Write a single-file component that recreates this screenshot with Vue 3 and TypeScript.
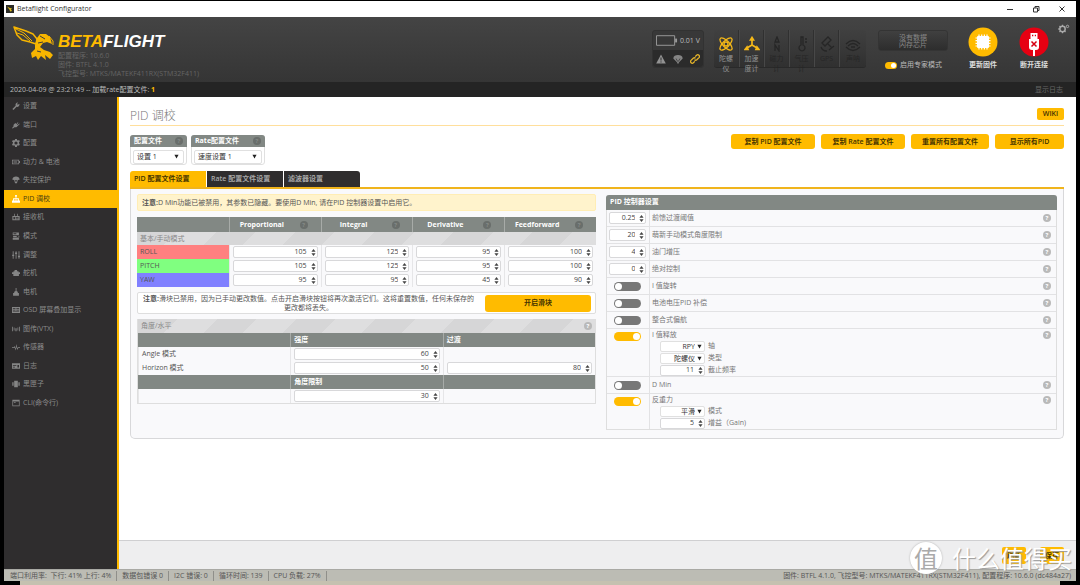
<script setup lang="ts">
import { ref } from 'vue'

interface NavItem { icon: string; label: string }
interface PidRow { name: string; color: string; values: number[] }
interface SubField { kind: 'select' | 'number'; value: string; label: string }
interface Feature { id: string; label: string; on: boolean; fields: SubField[] }

const nav: NavItem[] = [
  { icon: 'wrench', label: '设置' },
  { icon: 'plug', label: '端口' },
  { icon: 'gear', label: '配置' },
  { icon: 'battery', label: '动力 & 电池' },
  { icon: 'chute', label: '失控保护' },
  { icon: 'pid', label: 'PID 调校' },
  { icon: 'receiver', label: '接收机' },
  { icon: 'modes', label: '模式' },
  { icon: 'sliders', label: '调整' },
  { icon: 'servo', label: '舵机' },
  { icon: 'motor', label: '电机' },
  { icon: 'osd', label: 'OSD 屏幕叠加显示' },
  { icon: 'vtx', label: '图传(VTX)' },
  { icon: 'pulse', label: '传感器' },
  { icon: 'log', label: '日志' },
  { icon: 'box', label: '黑匣子' },
  { icon: 'cli', label: 'CLI(命令行)' },
]

const icons: Record<string, string> = {
  wrench: 'M.5 9.500 5 5.200C4.200 2.800 6 .5 8.500 .8L6.900 2.700 8 3.900 10.200 2.400C10.800 5 8.600 7.300 6.300 6.700L2.100 10.900Z',
  plug: 'M0 9.5 2 7.6 2.2 5 4.6 2.6 6 4 8 1.6 8.8 2.3 6.8 4.8 7.6 5.5 10 3.4 10.6 4.2 8.2 6.4 6 8.6 3.4 8.6 1 10.4Z',
  gear: 'M4.2 0H6.8L7 1.6 8.3 2.2 9.7 1.3 10.8 3.2 9.6 4.4V6L10.8 7.2 9.6 9.2 8.1 8.5 7 9.3 6.7 11H4.2L3.9 9.3 2.8 8.6 1.2 9.3 0 7.2 1.3 6V4.6L0 3.4 1.3 1.3 2.8 2.1 3.9 1.5ZM5.5 3.3A2.2 2.2 0 1 0 5.5 7.7 2.2 2.2 0 1 0 5.5 3.3Z',
  battery: 'M0 2.5H9.8V4H11V7H9.8V8.5H0ZM1 3.5V7.5H8.8V3.5ZM2 4.8H7V6.2H2Z',
  chute: 'M.5 5C.6 2.2 2.8 .6 5.5 .6S10.4 2.2 10.5 5L8 5.6 6.8 9.8H4.2L3 5.6ZM4 5.8 5 8H6L7 5.8Z',
  pid: 'M4.3 0H6.7V2.5H6V4.5H9.5V7.5H11V10.5H0V7.5H1.5V4.5H5V2.5H4.3ZM3 6V7.5H5V6ZM6 6V7.5H8V6Z',
  receiver: 'M3 1H4V4H7V1H8V4H10.5V10H.5V4H3ZM2 5.5V8.5H4V5.5ZM5 5.5V6.5H9V5.5ZM5 7.5V8.5H9V7.5Z',
  modes: 'M1 .6H9.5V4H1ZM2 1.6V3H6V1.6ZM1.5 5H10V7.6H1.5ZM6.5 5.6V7H9V5.6ZM1 8.4H9.5V10.6H1Z',
  sliders: 'M1 .5H2.2V5H3V7H2.2V10.5H1V7H.2V5H1ZM5 .5H6.2V2H7V4H6.2V10.5H5V4H4.2V2H5ZM9 .5H10.2V6.5H11V8.5H10.2V10.5H9V8.5H8.2V6.5H9Z',
  servo: 'M3.5 1.5H7V3H9V4.5H11V7H9.5V9.5H1.8V7H0V4.5H2V3H3.5Z',
  motor: 'M5 0H6.2V4L8 5V7H9.5V10.5H1.5V7H3V5L5 4Z',
  osd: 'M0 1.5H11V9.5H0ZM1.2 3V4H4.8V3ZM6 3V4H9.8V3ZM1.2 5.2V6.2H4.8V5.2ZM6 5.2V6.2H9.8V5.2ZM1.2 7.2V8H9.8V7.2Z',
  vtx: 'M.2 2.5H1.3V8.5H.2ZM2.4 3.5H3.4V7.5H2.4ZM4.7 4.5H6.3V8.5H4.7ZM7.6 3.5H8.6V7.5H7.6ZM9.7 2.5H10.8V8.5H9.7Z',
  pulse: 'M0 6H2.6L3.8 4 4.8 8 6 1.5 7.2 7.3 8 6H11V7H8.6L7.3 9.6 6 5.4 5 10.4 3.6 6.2 3.1 7H0Z',
  log: 'M0 1.8H11V9.2H0ZM1.2 4V5H6V4ZM1.2 6.4V7.4H4V6.4ZM7.5 4V7.4H9.6V4Z',
  box: 'M3 1H8V10H3ZM.4 3H2.2V8H.4ZM8.8 3H10.6V8H8.8Z',
  cli: 'M.5 1H10.5V10H.5ZM1.5 3.3V9H9.5V3.3ZM2.5 4.6H5V5.6H2.5Z',
}

const sensors = [
  { id: 'gyro', label: '陀螺仪', on: true },
  { id: 'accel', label: '加速度计', on: true },
  { id: 'mag', label: '磁力计', on: false },
  { id: 'baro', label: '气压计', on: false },
  { id: 'gps', label: 'GPS', on: false },
  { id: 'sonar', label: '声呐', on: false },
]

const actions = ['复制 PID 配置文件', '复制 Rate 配置文件', '重置所有配置文件', '显示所有PID']
const tabs = ['PID 配置文件设置', 'Rate 配置文件设置', '滤波器设置']
const activeTab = ref(0)
const activeNav = ref(5)
const expert = ref(true)

const terms = ['Proportional', 'Integral', 'Derivative', 'Feedforward']
const rows = ref<PidRow[]>([
  { name: 'ROLL', color: 'roll', values: [105, 125, 95, 100] },
  { name: 'PITCH', color: 'pitch', values: [105, 125, 95, 100] },
  { name: 'YAW', color: 'yaw', values: [95, 95, 45, 90] },
])

const numeric = ref([
  { id: 'ff', value: '0.25', label: '前馈过渡阈值' },
  { id: 'acro', value: '20', label: '萌新手动模式角度限制' },
  { id: 'throttle', value: '4', label: '油门增压' },
  { id: 'absolute', value: '0', label: '绝对控制' },
])

const features = ref<Feature[]>([
  { id: 'rotation', label: 'I 值旋转', on: false, fields: [] },
  { id: 'vbat', label: '电池电压PID 补偿', on: false, fields: [] },
  { id: 'yawint', label: '整合式偏航', on: false, fields: [] },
  {
    id: 'relax', label: 'I 值释放', on: true, fields: [
      { kind: 'select', value: 'RPY', label: '轴' },
      { kind: 'select', value: '陀螺仪', label: '类型' },
      { kind: 'number', value: '11', label: '截止频率' },
    ],
  },
  { id: 'dmin', label: 'D Min', on: false, fields: [] },
  {
    id: 'antigravity', label: '反重力', on: true, fields: [
      { kind: 'select', value: '平滑', label: '模式' },
      { kind: 'number', value: '5', label: '增益（Gain)' },
    ],
  },
])

const stats = ['端口利用率:  下行: 41% 上行: 4%', '数据包错误 0', 'I2C 错误: 0', '循环时间: 139', 'CPU 负载: 27%']
</script>

<template>
  <div class="screen">
    <div class="window">
      <div class="titlebar">
        <svg class="app-icon" viewBox="0 0 8 8"><path d="M0 0H8V8H0Z" fill="#2c2c28" /><path d="M1 1.5 4 3 6 3.2 5 4.3 6 6 4.2 6.6 3.4 4.4Z" fill="#d9b81c" /></svg>
        <span class="app-name">Betaflight Configurator</span>
        <div class="window-buttons">
          <button aria-label="最小化"><svg viewBox="0 0 8 8"><path d="M1 4.5H7" /></svg></button>
          <button aria-label="还原"><svg viewBox="0 0 8 8"><path d="M1.5 3H5.5V7H1.5ZM3 3V1.5H7V5.5H5.5" /></svg></button>
          <button aria-label="关闭"><svg viewBox="0 0 8 8"><path d="M1.5 1.5 6.5 6.5M6.5 1.5 1.5 6.5" /></svg></button>
        </div>
      </div>

      <header class="header">
        <svg class="wasp" viewBox="0 0 42 34">
          <path d="M1 1 13 5 20 8 24 13 23 18 17 16 9 14 4 9Z" fill="none" stroke="#f7b500" stroke-width="1.500" stroke-linejoin="round" />
          <path d="M3 3 11 7 19 15M4 7 10 9 17 15" fill="none" stroke="#f7b500" stroke-width="1" />
          <path d="M24 12 27 8 33 8 37 11 39 18 34 16 30 17 27 21 31 24 37 26 40 29 37 33 32 29 33 34 28 30 25 34 23 30 19 32 18 27 22 23 22 19Z" fill="#f7b500" />
          <path d="M27 10 32 13M25 17 30 16M24 25 28 26" stroke="#3d3d3d" stroke-width="1" />
          <path d="M36 10 40 15 40 19" fill="none" stroke="#f7b500" stroke-width="1" />
        </svg>
        <div class="brand">
          <div class="wordmark"><span>BETA</span>FLIGHT</div>
          <p>配置程序: 10.6.0</p>
          <p>固件: BTFL 4.1.0</p>
          <p>飞控型号: MTKS/MATEKF411RX(STM32F411)</p>
        </div>

        <div class="battery-box">
          <div class="voltage">
            <svg viewBox="0 0 23 11"><path d="M.5 .5H19.5V10.5H.5Z" fill="none" stroke="#9a9a9a" /><path d="M20 3.5H22V7.5H20Z" fill="#9a9a9a" /></svg>
            <span>0.01 V</span>
          </div>
          <div class="flags">
            <svg viewBox="0 0 10 10"><path d="M5 .5 9.8 9.5H.2Z" fill="#929292" /><path d="M5 3.5V6.5M5 7.4V8.5" stroke="#2e2e2e" stroke-width="1" /></svg>
            <svg viewBox="0 0 10 10"><path d="M.3 4.400C.5 2 2.400 1 5 1S9.500 2 9.700 4.400L5.800 8.500V9.500H4.200V8.500Z" fill="#858585" /><path d="M3 4.500 4.700 7.500M7 4.500 5.300 7.500" stroke="#2e2e2e" stroke-width=".7" /></svg>
            <svg viewBox="0 0 10 10"><path d="M5.200 2.600 6.600 1.200A1.700 1.700 0 0 1 9 3.600L6.800 5.800A1.700 1.700 0 0 1 4.500 5.700M4.800 7.400 3.400 8.800A1.700 1.700 0 0 1 1 6.400L3.200 4.200A1.700 1.700 0 0 1 5.500 4.300" fill="none" stroke="#e5b429" stroke-width="1.300" /></svg>
          </div>
        </div>

        <ul class="sensors">
          <li v-for="s in sensors" :key="s.id" :class="{ on: s.on }">
            <svg viewBox="0 0 16 16">
              <g v-if="s.id === 'gyro'">
                <ellipse cx="8" cy="8" rx="8" ry="3.200" transform="rotate(45 8 8)" /><ellipse cx="8" cy="8" rx="8" ry="3.200" transform="rotate(-45 8 8)" /><circle cx="8" cy="8" r="2" />
              </g>
              <g v-else-if="s.id === 'accel'"><path d="M8 2V9L2 12.500M8 9 14 12.500M6.500 4 8 1.500 9.500 4ZM3 11 1 13.500H4ZM13 11 15 13.500H12Z" stroke-width="1.700" /></g>
              <g v-else-if="s.id === 'mag'"><path d="M6 6 8 1 10 6ZM6 15V9L10 15V9" /></g>
              <g v-else-if="s.id === 'baro'"><path d="M7 1H9V9A3 3 0 1 1 7 9ZM11 3H13M11 6H13" /></g>
              <g v-else-if="s.id === 'gps'"><path d="M3 7 9 1 12 4 6 10ZM9 8 13 12M2 11A6 6 0 0 0 8 15M10 14 15 10" /></g>
              <g v-else><path d="M1 8Q8 1 15 8M3 10Q8 5 13 10M1 11Q8 18 15 11M6 11H10" /></g>
            </svg>
            <span>{{ s.label }}</span>
          </li>
        </ul>

        <div class="dataflash">
          <div class="flash">没有数据<br>闪存芯片</div>
          <label class="expert"><input v-model="expert" type="checkbox"><span>启用专家模式</span></label>
        </div>

        <button class="round">
          <svg viewBox="0 0 30 30"><circle cx="15" cy="15" r="14.500" fill="#ffbb00" /><path d="M10 10H20V20H10Z" fill="#fff" stroke="#fff" stroke-linejoin="round" stroke-width="2" /><path d="M11 7.500V22.500M13.700 7.500V22.500M16.400 7.500V22.500M19 7.500V22.500M7.500 11H22.500M7.500 13.700H22.500M7.500 16.400H22.500M7.500 19H22.500" stroke="#fff" stroke-width="1.200" /></svg>
          <span>更新固件</span>
        </button>
        <button class="round">
          <svg viewBox="0 0 30 30"><circle cx="15" cy="15" r="14.500" fill="#e60012" /><path d="M11.500 6H18.500V12H11.500ZM10 12H20V20Q20 23 17 23H13Q10 23 10 20ZM14 23H16V29H14Z" fill="#fff" /><path d="M13 8.500H14.300M15.800 8.500H17M12.500 14.500 17.500 19.500M17.500 14.500 12.500 19.500" stroke="#d50012" stroke-width="1.500" /></svg>
          <span>断开连接</span>
        </button>
        <button class="options" aria-label="选项"><svg viewBox="0 0 12 10"><circle cx="4.500" cy="5" r="2.700" fill="none" stroke="#aaa" stroke-width="1.500" /><path d="M4.500 .8V2M4.500 8V9.200M.3 5H1.500M1.500 2 2.400 2.900M1.500 8 2.400 7.100M7.500 8 6.600 7.100" stroke="#aaa" stroke-width="1.300" /><circle cx="9.500" cy="2.400" r="1.200" fill="none" stroke="#aaa" /></svg></button>
      </header>

      <div class="logbar">
        <span>2020-04-09 @ 23:21:49 -- 加载rate配置文件: <b>1</b></span>
        <button>显示日志</button>
      </div>

      <div class="body">
        <nav class="sidebar">
          <ul>
            <li v-for="(item, i) in nav" :key="item.icon" :class="{ active: i === activeNav }">
              <a href="#" @click.prevent="activeNav = i">
                <svg viewBox="0 0 11 11"><path :d="icons[item.icon]" fill-rule="evenodd" /></svg>
                <span>{{ item.label }}</span>
              </a>
            </li>
          </ul>
        </nav>

        <main class="content">
          <div class="page">
            <div class="heading">
              <h1>PID 调校</h1>
              <a class="wiki" href="#">WIKI</a>
            </div>

            <div class="profiles">
              <div class="profile first">
                <label for="profile">配置文件<i class="help dark">?</i></label>
                <div class="pick"><select id="profile"><option>设置 1</option></select><svg viewBox="0 0 6 6"><path d="M.5 1H5.500L3 5.500Z" /></svg></div>
              </div>
              <div class="profile second">
                <label for="rate">Rate配置文件<i class="help dark">?</i></label>
                <div class="pick"><select id="rate"><option>速度设置 1</option></select><svg viewBox="0 0 6 6"><path d="M.5 1H5.500L3 5.500Z" /></svg></div>
              </div>
              <div class="actions">
                <button v-for="a in actions" :key="a">{{ a }}</button>
              </div>
            </div>

            <div class="tabs">
              <button v-for="(t, i) in tabs" :key="t" :class="{ active: i === activeTab }" @click="activeTab = i">{{ t }}</button>
            </div>

            <div class="panel">
              <section class="left">
                <p class="note"><b>注意:</b>D Min功能已被禁用，其参数已隐藏。要使用D Min, 请在PID 控制器设置中启用它。</p>

                <table class="grid pid">
                  <thead>
                    <tr>
                      <th></th>
                      <th v-for="t in terms" :key="t"><div class="term"><span>{{ t }}</span><i class="help dark">?</i></div></th>
                    </tr>
                  </thead>
                  <tbody>
                    <tr class="section"><td colspan="5">基本/手动模式</td></tr>
                    <tr v-for="r in rows" :key="r.name">
                      <td :class="r.color">{{ r.name }}</td>
                      <td v-for="(v, i) in r.values" :key="i">
                        <div class="number"><input v-model="r.values[i]" type="number" :aria-label="r.name + ' ' + terms[i]"><svg viewBox="0 0 6 10"><path d="M.5 4 3 .8 5.500 4ZM.5 6 3 9.200 5.500 6Z" /></svg></div>
                      </td>
                    </tr>
                  </tbody>
                </table>

                <div class="slider-note">
                  <p><b>注意:</b>滑块已禁用，因为已手动更改数值。点击开启滑块按钮将再次激活它们。这将重置数值，任何未保存的更改都将丢失。</p>
                  <button>开启滑块</button>
                </div>

                <table class="grid angle">
                  <tbody>
                    <tr class="section"><td colspan="3"><div class="between"><span>角度/水平</span><i class="help">?</i></div></td></tr>
                    <tr class="dark"><th></th><th>强度</th><th>过渡</th></tr>
                    <tr>
                      <td><label for="angle">Angle 模式</label></td>
                      <td><div class="number"><input id="angle" type="number" value="60"><svg viewBox="0 0 6 10"><path d="M.5 4 3 .8 5.500 4ZM.5 6 3 9.200 5.500 6Z" /></svg></div></td>
                      <td></td>
                    </tr>
                    <tr>
                      <td><label for="horizon">Horizon 模式</label></td>
                      <td><div class="number"><input id="horizon" type="number" value="50"><svg viewBox="0 0 6 10"><path d="M.5 4 3 .8 5.500 4ZM.5 6 3 9.200 5.500 6Z" /></svg></div></td>
                      <td><div class="number"><input type="number" value="80" aria-label="Horizon 过渡"><svg viewBox="0 0 6 10"><path d="M.5 4 3 .8 5.500 4ZM.5 6 3 9.200 5.500 6Z" /></svg></div></td>
                    </tr>
                    <tr class="dark"><th></th><th><label for="limit">角度限制</label></th><th></th></tr>
                    <tr>
                      <td></td>
                      <td><div class="number"><input id="limit" type="number" value="30"><svg viewBox="0 0 6 10"><path d="M.5 4 3 .8 5.500 4ZM.5 6 3 9.200 5.500 6Z" /></svg></div></td>
                      <td></td>
                    </tr>
                  </tbody>
                </table>
              </section>

              <section class="right">
                <h2>PID 控制器设置</h2>
                <div v-for="n in numeric" :key="n.id" class="setting">
                  <div class="control"><div class="number"><input :id="n.id" v-model="n.value" type="number" step="any"><svg viewBox="0 0 6 10"><path d="M.5 4 3 .8 5.500 4ZM.5 6 3 9.200 5.500 6Z" /></svg></div></div>
                  <div class="detail"><label :for="n.id">{{ n.label }}</label></div>
                  <i class="help">?</i>
                </div>
                <div v-for="f in features" :key="f.id" class="setting" :class="{ tall: f.fields.length }">
                  <div class="control"><input :id="f.id" v-model="f.on" class="switch" type="checkbox"></div>
                  <div class="detail">
                    <label :for="f.id">{{ f.label }}</label>
                    <div v-for="s in f.fields" :key="s.label" class="field">
                      <div v-if="s.kind === 'select'" class="pick small"><select :id="f.id + s.label"><option>{{ s.value }}</option></select><svg viewBox="0 0 6 6"><path d="M.5 1H5.500L3 5.500Z" /></svg></div>
                      <div v-else class="number"><input :id="f.id + s.label" v-model="s.value" type="number"><svg viewBox="0 0 6 10"><path d="M.5 4 3 .8 5.500 4ZM.5 6 3 9.200 5.500 6Z" /></svg></div>
                      <label :for="f.id + s.label">{{ s.label }}</label>
                    </div>
                  </div>
                  <i class="help">?</i>
                </div>
              </section>
            </div>
          </div>

          <div class="toolbar"><button>刷新</button><button>保存</button></div>
        </main>
      </div>

      <footer class="status">
        <span v-for="s in stats" :key="s" class="stat">{{ s }}</span>
        <span class="version">固件: BTFL 4.1.0, 飞控型号: MTKS/MATEKF411RX(STM32F411), 配置程序: 10.6.0 (dc484a27)</span>
      </footer>
    </div>
    <div class="desk-edge"></div>

    <div class="watermark"><span class="seal">值</span><span class="words">什么值得买</span></div>
  </div>
</template>

<style>
body { margin: 0; background: #000; }
</style>

<style scoped>
* { box-sizing: border-box; }
.screen {
  position: relative;
  display: flex;
  flex-direction: column;
  min-height: 100vh;
  padding: 1px 4px 0;
  background: #000;
  color: #555;
  font: 7px/10px "Open Sans", "Noto Sans CJK SC", sans-serif;
}
button, input, select { margin: 0; padding: 0; border: 0; font: inherit; color: inherit; background: none; }
a { color: inherit; text-decoration: none; }
ul { margin: 0; padding: 0; list-style: none; }
p, h1, h2 { margin: 0; }
svg { display: block; flex: none; }
.window { flex: 1; display: flex; flex-direction: column; }

.titlebar { display: flex; align-items: center; height: 16px; padding: 0 10px 0 2px; background: #fff; color: #333; }
.app-icon { width: 8px; height: 8px; margin-right: 3px; }
.app-name { flex: 1; }
.window-buttons { display: flex; gap: 18px; }
.window-buttons button { width: 8px; height: 8px; }
.window-buttons svg { width: 8px; height: 8px; fill: none; stroke: #333; stroke-width: 1; }

.header { display: flex; height: 65px; padding: 9px 6px 0 9px; background: linear-gradient(#444, #353535); }
.wasp { width: 42px; height: 34px; }
.brand { flex: 1; margin-left: 3px; padding-top: 7px; color: #656565; }
.brand p { line-height: 9px; }
.wordmark { height: 18px; color: #fff; font: italic 900 17px/18px "Liberation Sans", Inter, sans-serif; }
.wordmark span { color: #ffbb00; }
.battery-box { width: 52px; height: 38px; margin: 4px 10px 0 0; border-radius: 3px; background: #383838; border: 1px solid #323232; }
.voltage { display: flex; align-items: center; gap: 2px; height: 19px; padding-left: 3px; color: #bbb; white-space: nowrap; }
.voltage svg { width: 22px; height: 11px; }
.flags { display: flex; align-items: center; justify-content: space-around; height: 17px; background: #2b2b2b; border-radius: 0 0 3px 3px; }
.flags svg { width: 10px; height: 10px; }
.sensors { display: flex; height: 38px; margin: 4px 12px 0 0; border-radius: 3px; background: linear-gradient(#404040, #303030); border-bottom: 1px solid #292929; }
.sensors li { width: 25px; padding-top: 6px; border-right: 1px solid #303030; color: #262626; text-align: center; }
.sensors li + li { border-left: 1px solid #484848; }
.sensors li:last-child { width: 27px; border-right: 0; }
.sensors svg { width: 16px; height: 16px; margin: 0 auto 2px; fill: none; stroke: #262626; stroke-width: 1.3; }
.sensors .on { color: #929292; }
.sensors .on svg { stroke: #f5b818; }
.sensors span { display: block; width: 15px; margin: 0 auto; }
.dataflash { width: 70px; margin-right: 20px; padding-top: 4px; }
.flash { height: 21px; padding-top: 3px; border-radius: 3px; background: linear-gradient(#404040, #2d2d2d); border: 1px solid #343434; color: #888; line-height: 7px; text-align: center; }
.expert { display: flex; align-items: center; gap: 3px; height: 10px; margin: 9px 0 0 7px; color: #bbb; white-space: nowrap; }
.expert input, .switch { position: relative; appearance: none; border-radius: 6px; background: #777; }
.expert input { width: 12px; height: 7px; }
.expert input::before, .switch::before { content: ""; position: absolute; left: 1px; top: 1px; border-radius: 50%; background: #fff; }
.expert input::before { width: 5px; height: 5px; }
.expert input:checked, .switch:checked { background: #ffbb00; }
.expert input:checked::before { left: 6px; }
.round { display: flex; flex-direction: column; align-items: center; gap: 3px; width: 30px; margin-right: 21px; padding-top: 1px; color: #ddd; font-weight: 700; white-space: nowrap; }
.round svg { width: 30px; height: 30px; }
.round + .round { margin-right: 9px; }
.options { width: 12px; height: 10px; margin-top: -2px; }
.options svg { width: 12px; height: 10px; }

.logbar { display: flex; justify-content: space-between; align-items: center; height: 15px; padding: 0 13px 0 6px; background: #242424; color: #bbb; }
.logbar b { color: #ffbb00; }
.logbar button { color: #666; }

.body { flex: 1; display: flex; }
.sidebar { width: 115px; border-right: 2px solid #ffbb00; background: #2f2d2e; color: #8c8c8c; }
.sidebar ul { display: flex; flex-direction: column; height: 315px; }
.sidebar li { flex: 1; display: flex; }
.sidebar a { flex: 1; display: flex; align-items: center; gap: 3px; padding-left: 8px; }
.sidebar svg { width: 8px; height: 8px; fill: #858585; }
.sidebar .active { background: #ffbb00; color: #4b3b10; }
.sidebar .active svg { fill: #fff; }

.content { flex: 1; display: flex; flex-direction: column; background: #fff; }
.page { flex: 1; padding: 11px 12px 0 11px; }
.heading { display: flex; justify-content: space-between; height: 18px; border-bottom: 1px solid #ffdf9c; }
.heading h1 { color: #777; font-size: 12px; font-weight: 300; line-height: 15px; }
.wiki { width: 27px; height: 12px; border-radius: 2px; background: #ffbb00; color: #443300; font-weight: 600; line-height: 12px; text-align: center; }

.profiles { display: flex; gap: 4px; margin-top: 9px; height: 30px; }
.profile { border-radius: 3px; border: 1px solid #e0e0e0; background: #fff; }
.first { width: 57px; }
.second { width: 74px; }
.profile label { display: flex; align-items: center; justify-content: space-between; height: 12px; margin: -1px -1px 0; padding: 0 4px; border-radius: 3px 3px 0 0; background: #828884; color: #fff; font-weight: 700; }
.pick { position: relative; height: 14px; margin: 3px 2px 0; border: 1px solid #e0e0e0; border-radius: 2px; background: #fff; color: #333; }
.pick select { display: block; width: 100%; height: 100%; padding-left: 3px; appearance: none; line-height: 12px; }
.pick svg { position: absolute; right: 4px; top: 3px; width: 5px; height: 5px; fill: #222; pointer-events: none; }
.help { display: block; flex: none; width: 8px; height: 8px; border-radius: 50%; background: #b9b9b9; color: #fff; font: 700 6px/8px "Open Sans", sans-serif; text-align: center; }
.help.dark { background: #696e6b; color: #858a87; }
.actions { display: flex; gap: 6px; margin-left: auto; height: 15px; margin-top: -1px; }
.actions button, .slider-note button { border-radius: 3px; background: #ffbb00; color: #443300; font-weight: 600; white-space: nowrap; }
.actions button { width: 84px; }
.actions button:nth-child(3) { width: 78px; }
.actions button:nth-child(4) { width: 69px; }

.tabs { display: flex; gap: 1px; margin-top: 6px; border-bottom: 2px solid #f0b41c; }
.tabs button { width: 76px; height: 16px; padding-left: 4px; background: #2f2d2e; color: #a8a8a8; text-align: left; white-space: nowrap; font-weight: 600; }
.tabs button:first-child { border-top-left-radius: 3px; }
.tabs button:last-child { border-top-right-radius: 3px; }
.tabs .active { background: #ffbb00; color: #443300; }

.panel { display: flex; gap: 10px; align-items: flex-start; min-height: 250px; padding: 5px 6px 8px; border: 1px solid #d8d8da; border-top: 0; border-radius: 0 0 5px 5px; background: #f9f9fb; }
.left { flex: 460; min-width: 0; }
.right { flex: 450; min-width: 0; margin-top: 1px; border: 1px solid #dedede; border-top: 0; border-radius: 3px 3px 0 0; }
.note { height: 17px; margin-bottom: 6px; padding-left: 4px; border: 1px solid #ffedb5; border-radius: 2px; background: #fff3cc; line-height: 15px; }
.grid { width: 100%; border-spacing: 0; table-layout: fixed; }
.grid td { height: 14px; padding: 0 3px; border-left: 1px solid #e6e6e8; }
.grid th { height: 15px; padding: 0 3px; border-left: 1px solid #a7aba8; background: #828884; color: #fff; text-align: left; font-weight: 700; }
.grid .section td { height: 13px; border: 0; background: repeating-linear-gradient(135deg, #d6d6d7 0 28px, #dededf 28px 56px); color: #888; }
.grid .roll { background: #ff8080; }
.grid .pitch { background: #80ff80; }
.grid .yaw { background: #8080ff; }
.grid .roll, .grid .pitch, .grid .yaw { border-left: 0; }
.pid th:first-child, .angle th:first-child { border-left-color: #828884; }
.term { display: flex; align-items: center; gap: 9px; }
.term span { width: 58px; text-align: center; }
.number { display: flex; align-items: center; height: 12px; padding-right: 1px; border: 1px solid #d8d8da; border-radius: 2px; background: #fff; color: #444; }
.number input { flex: 1; width: 0; min-width: 0; height: 10px; padding-right: 4px; text-align: right; appearance: textfield; outline: 0; }
.number input::-webkit-inner-spin-button { appearance: none; margin: 0; }
.number svg { width: 5px; height: 9px; fill: #444; }

.slider-note { display: flex; align-items: center; height: 22px; margin: 5px 0; padding: 1px 4px; border: 1px solid #dedede; border-radius: 2px; background: #fff; }
.slider-note p { flex: 1; line-height: 9px; text-align: center; }
.slider-note button { width: 106px; height: 17px; margin-left: 10px; font-weight: 700; }
.angle { border: 1px solid #dedede; border-top: 0; }
.angle .section td { height: 14px; }
.angle .dark th { height: 14px; }
.between { display: flex; align-items: center; justify-content: space-between; }

.right h2 { height: 15px; margin: 0 -1px; padding-left: 4px; border-radius: 3px 3px 0 0; background: #828884; color: #fff; font-size: 7px; font-weight: 700; line-height: 14px; }
.setting { display: flex; align-items: center; min-height: 17px; padding-right: 5px; border-bottom: 1px solid #e2e2e4; color: #777; }
.setting:last-child { border-bottom: 0; }
.control { align-self: stretch; display: flex; align-items: center; justify-content: center; width: 43px; border-right: 1px solid #e2e2e4; }
.control .number { width: 37px; }
.detail { flex: 1; padding-left: 2px; }
.switch { width: 27px; height: 9px; }
.switch::before { width: 7px; height: 7px; }
.switch:checked::before { left: 19px; }
.tall { align-items: flex-start; }
.tall .control { align-items: flex-start; padding-top: 3px; }
.tall .detail > label { display: block; height: 11px; line-height: 12px; }
.tall > .help { margin-top: 2px; }
.field { display: flex; align-items: center; gap: 3px; height: 12px; padding-left: 8px; }
.field .number { width: 45px; height: 11px; }
.pick.small { width: 45px; height: 11px; margin: 0; }
.pick.small select { padding-right: 9px; line-height: 9px; text-align: right; text-align-last: right; }
.pick.small svg { top: 2px; right: 2px; }

.toolbar { display: flex; justify-content: flex-end; gap: 14px; height: 29px; padding: 6px 12px; border-top: 1px solid #cfcfd1; background: #eeeeef; }
.toolbar button { width: 24px; height: 17px; border-radius: 2px; background: #ffbb00; color: #443300; font-weight: 700; }

.status { display: flex; align-items: center; height: 12px; padding: 0 5px 0 6px; background: #bcbcb4; border-top: 1px solid #a9a9a4; color: #555; white-space: pre; }
.stat { padding-right: 5px; margin-right: 5px; border-right: 1px solid #8f8f8a; }
.version { margin-left: auto; }
.desk-edge { height: 4px; margin: 0 16px; background: #c5c1b0; }

.watermark { position: absolute; right: 8px; bottom: 11px; display: flex; align-items: center; gap: 10px; color: #fff; font-family: "Noto Sans CJK SC", sans-serif; pointer-events: none; }
.seal { width: 32px; height: 32px; border-radius: 50%; background: #fff; color: #aaa; font-size: 24px; line-height: 31px; text-align: center; box-shadow: 0 0 2px #aaa; }
.words { font-size: 24px; line-height: 32px; text-shadow: 1px 1px 1px #999; }
</style>
